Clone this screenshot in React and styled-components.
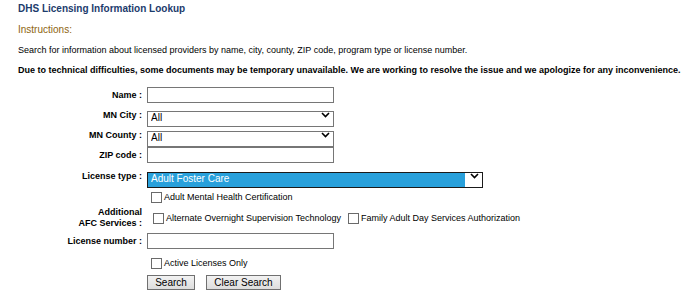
import React from 'react'
import styled, { createGlobalStyle, css } from 'styled-components'

const GlobalStyle = createGlobalStyle`
  body {
    margin: 0;
    background: #fff;
    font-family: "Liberation Sans", Arial, sans-serif;
    color: #000;
  }
`

const Page = styled.div`
  padding: 3px 0 0 18px;
  width: 684px;
  height: 296px;
  box-sizing: border-box;
  overflow: hidden;
`

const Title = styled.h1`
  margin: 0;
  font-size: 10px;
  line-height: 12px;
  font-weight: 700;
  color: #1c3b6c;
`

const SubHead = styled.div`
  margin-top: 9px;
  font-size: 10px;
  line-height: 12px;
  color: #8e6510;
`

const Text = styled.p`
  margin: ${p => p.$mt || 0}px 0 0;
  font-size: 9px;
  line-height: 12px;
  font-weight: ${p => (p.$bold ? 700 : 400)};
  white-space: nowrap;
`

const Form = styled.div`
  display: flex;
  flex-direction: column;
  margin-top: 11px;
`

const Row = styled.div`
  display: flex;
  align-items: center;
  gap: 5px;
  margin-top: ${p => p.$mt || 0}px;
  min-height: ${p => p.$h || 16}px;
`

const Label = styled.label`
  width: 124px;
  flex: none;
  text-align: right;
  font-size: 9px;
  line-height: 11px;
  font-weight: 700;
`

const TextInput = styled.input`
  box-sizing: border-box;
  width: 187px;
  height: 16px;
  margin: 0;
  padding: 0 3px;
  border: 1px solid #767676;
  background: #fff;
  font: 10px "Liberation Sans", Arial, sans-serif;
`

const SelectWrap = styled.div`
  position: relative;
  width: ${p => p.$w}px;
  height: 16px;
`

const Select = styled.select`
  appearance: none;
  box-sizing: border-box;
  width: 100%;
  height: 16px;
  margin: 0;
  padding: 0 0 2px 3px;
  border: 1px solid #767676;
  border-radius: 0;
  background: #fff;
  color: #000;
  font: 10px/12px "Liberation Sans", Arial, sans-serif;
  ${p => p.$active && css`
    border-color: #1a1a1a;
    color: #fff;
    background: linear-gradient(to right, #28a0db calc(100% - 17px), #fff calc(100% - 17px));
  `}
`

const Arrow = styled.svg`
  position: absolute;
  right: 4px;
  top: 5px;
  pointer-events: none;
`

const Check = styled.label`
  display: flex;
  align-items: center;
  gap: 2px;
  margin-left: ${p => p.$ml || 0}px;
  font-size: 9px;
  line-height: 11px;
  white-space: nowrap;
`

const Box = styled.input`
  appearance: none;
  box-sizing: border-box;
  width: 11px;
  height: 11px;
  margin: 0;
  border: 1px solid #6a6a6a;
  border-radius: 0;
  background: #fff;
`

const Buttons = styled.div`
  display: flex;
  gap: 11px;
`

const Button = styled.button`
  box-sizing: border-box;
  width: ${p => p.$w}px;
  height: 15px;
  margin: 0;
  padding: 0;
  border: 1px solid #707070;
  border-radius: 0;
  background: linear-gradient(#f2f2f2, #dddddd);
  font: 10px "Liberation Sans", Arial, sans-serif;
  color: #000;
`

const Chevron = () => (
  <Arrow width="9" height="6" viewBox="0 0 9 6">
    <path d="M1 1 L4.5 4.5 L8 1" fill="none" stroke="#000" strokeWidth="1.6" />
  </Arrow>
)

const Dropdown = ({ width, value, active }) => (
  <SelectWrap $w={width}>
    <Select $active={active} defaultValue={value}>
      <option>{value}</option>
    </Select>
    <Chevron />
  </SelectWrap>
)

export default function App() {
  return (
    <Page>
      <GlobalStyle />
      <Title>DHS Licensing Information Lookup</Title>
      <SubHead>Instructions:</SubHead>
      <Text $mt={8}>
        Search for information about licensed providers by name, city, county, ZIP code, program type or license number.
      </Text>
      <Text $mt={8} $bold>
        Due to technical difficulties, some documents may be temporary unavailable. We are working to resolve the issue and we apologize for any inconvenience.
      </Text>
      <Form>
        <Row>
          <Label>Name :</Label>
          <TextInput type="text" />
        </Row>
        <Row $mt={4}>
          <Label>MN City :</Label>
          <Dropdown width={187} value="All" />
        </Row>
        <Row $mt={4}>
          <Label>MN County :</Label>
          <Dropdown width={187} value="All" />
        </Row>
        <Row $mt={4}>
          <Label>ZIP code :</Label>
          <TextInput type="text" />
        </Row>
        <Row $mt={5}>
          <Label>License type :</Label>
          <Dropdown width={336} value="Adult Foster Care" active />
        </Row>
        <Row $mt={6} $h={14}>
          <Label />
          <Check $ml={4}>
            <Box type="checkbox" />
            Adult Mental Health Certification
          </Check>
        </Row>
        <Row $mt={3} $h={22}>
          <Label>Additional<br />AFC Services :</Label>
          <Check $ml={6}>
            <Box type="checkbox" />
            Alternate Overnight Supervision Technology
          </Check>
          <Check $ml={2}>
            <Box type="checkbox" />
            Family Adult Day Services Authorization
          </Check>
        </Row>
        <Row $mt={4}>
          <Label>License number :</Label>
          <TextInput type="text" />
        </Row>
        <Row $mt={7} $h={14}>
          <Label />
          <Check $ml={4}>
            <Box type="checkbox" />
            Active Licenses Only
          </Check>
        </Row>
        <Row $mt={4}>
          <Label />
          <Buttons>
            <Button $w={48}>Search</Button>
            <Button $w={75}>Clear Search</Button>
          </Buttons>
        </Row>
      </Form>
    </Page>
  )
}
